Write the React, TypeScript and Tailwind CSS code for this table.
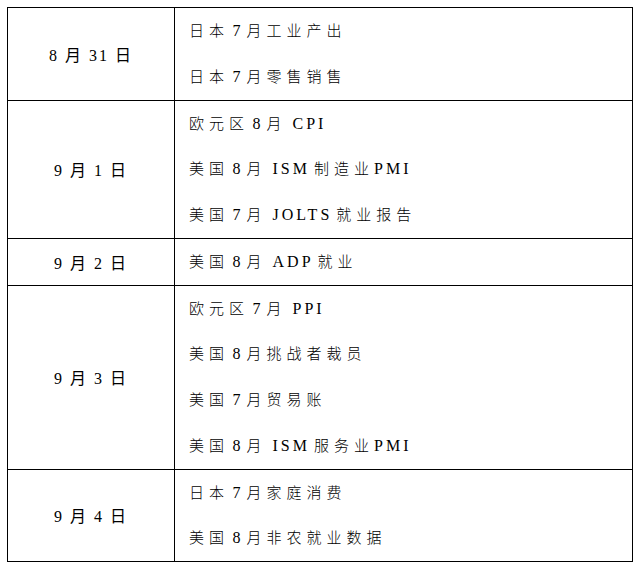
type Row = { date: string; items: string[] };

const rows: Row[] = [
  { date: '8 月 31 日', items: ['日本7月工业产出', '日本7月零售销售'] },
  { date: '9 月 1 日', items: ['欧元区8月CPI', '美国8月ISM制造业PMI', '美国7月JOLTS就业报告'] },
  { date: '9 月 2 日', items: ['美国8月ADP就业'] },
  { date: '9 月 3 日', items: ['欧元区7月PPI', '美国8月挑战者裁员', '美国7月贸易账', '美国8月ISM服务业PMI'] },
  { date: '9 月 4 日', items: ['日本7月家庭消费', '美国8月非农就业数据'] },
];

// split into CJK / Latin runs; Latin runs after 月 get the wider gap seen in the doc
function Item({ text }: { text: string }) {
  const parts = text.split(/([A-Za-z0-9]+)/).filter(Boolean);
  return (
    <div className="h-[45.75px] leading-[45.75px] whitespace-nowrap">
      {parts.map((p, i) => {
        if (/^[0-9]+$/.test(p)) {
          return (
            <span key={i} className="ml-[3.5px] mr-[2px] tracking-[4px] text-[16px]">
              {p}
            </span>
          );
        }
        if (/^[A-Za-z]+$/.test(p)) {
          const afterMonth = i > 0 && parts[i - 1].endsWith('月');
          return (
            <span
              key={i}
              className={
                afterMonth
                  ? 'ml-[6px] mr-[4px] tracking-[3px] text-[16px]'
                  : 'ml-0 mr-[4px] tracking-[3px] text-[16px]'
              }
            >
              {p}
            </span>
          );
        }
        return (
          <span key={i} className="tracking-[5px] font-light">
            {p}
          </span>
        );
      })}
    </div>
  );
}

export default function App() {
  return (
    <div className="w-[640px] h-[566px] bg-white pt-[7px] pl-[7px] font-['Liberation_Serif','Noto_Sans_CJK_SC',serif] text-[15px] text-black">
      <table className="w-[626px] border-collapse border border-black">
        <tbody>
          {rows.map((r) => (
            <tr key={r.date}>
              <td className="w-[167px] border border-black text-center align-middle p-0 text-[16px] tracking-[2px]">
                <span className="relative top-[2px]">{r.date}</span>
              </td>
              <td className="border border-black p-0 pl-[14px]">
                {r.items.map((it) => (
                  <Item key={it} text={it} />
                ))}
              </td>
            </tr>
          ))}
        </tbody>
      </table>
    </div>
  );
}
